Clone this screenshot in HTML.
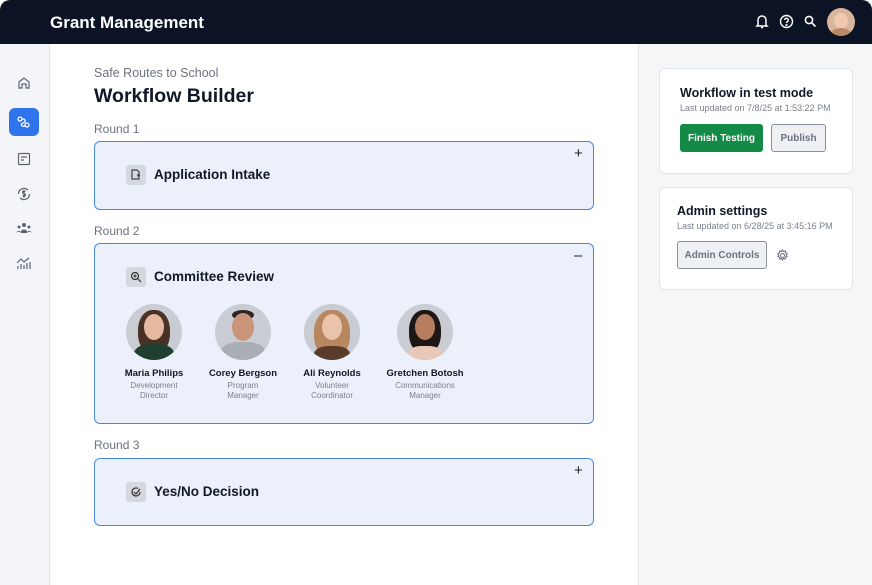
<!DOCTYPE html>
<html><head><style>
*{box-sizing:border-box;margin:0;padding:0}
body{width:872px;height:585px;overflow:hidden;font-family:"Liberation Sans",sans-serif;background:#fff;position:relative}
.hdr{position:absolute;left:0;top:0;width:872px;height:44px;background:#0b1324;border-radius:10px 10px 0 0}
.hdr .t{position:absolute;left:50px;top:13px;color:#fff;font-size:17px;font-weight:bold}
.side{position:absolute;left:0;top:44px;width:50px;height:541px;background:#f4f5f8;border-right:1px solid #e3e5ea}
.main{position:absolute;left:50px;top:44px;width:588px;height:541px;background:#fff}
.right{position:absolute;left:638px;top:44px;width:234px;height:541px;background:#f5f6f8;border-left:1px solid #e3e5ea}
.abs{position:absolute}
.card{position:absolute;left:94px;width:500px;background:#ebf0fb;border:1.5px solid #4a86e8;border-radius:6px}
.ic{position:absolute;width:20px;height:20px;background:#d5d8de;border-radius:3px}
.ct{position:absolute;font-size:13.5px;font-weight:bold;color:#111827}
.round{position:absolute;left:94px;font-size:12px;color:#6b7280}
.panel{position:absolute;left:659px;width:194px;background:#fff;border:1px solid #e2e5ea;border-radius:6px}
.btn{position:absolute;font-size:10px;font-weight:bold;border-radius:3px;display:flex;align-items:center;justify-content:center}
.p{position:absolute;text-align:center;width:100px}
.p .av{width:56px;height:56px;border-radius:50%;background:#c9ccd2;margin:0 auto;position:relative;overflow:hidden}
.p .n{font-size:9.5px;font-weight:bold;color:#111827;margin-top:8px}
.p .r{font-size:8px;color:#7b818c;line-height:10px;margin-top:2px}
</style></head><body>
<div class="hdr"><div class="t">Grant Management</div>
<svg class="abs" style="left:755px;top:14px" width="14" height="15" viewBox="0 0 14 15" fill="none" stroke="#fff" stroke-width="1.5"><path d="M3 11V6a4 4 0 018 0v5l1 1H2z"/><path d="M6 13.5h2"/></svg>
<svg class="abs" style="left:779px;top:14px" width="15" height="15" viewBox="0 0 15 15" fill="none" stroke="#fff" stroke-width="1.4"><circle cx="7.5" cy="7.5" r="6"/><path d="M5.7 6a1.8 1.8 0 113 1.4c-.8.5-1.2.8-1.2 1.6"/><circle cx="7.5" cy="11" r=".4"/></svg>
<svg class="abs" style="left:804px;top:15px" width="13" height="13" viewBox="0 0 13 13" fill="none" stroke="#fff" stroke-width="1.6"><circle cx="5" cy="5" r="3.6"/><path d="M7.8 7.8L11.5 11.5"/></svg>
<div class="abs" style="left:827px;top:8px;width:28px;height:28px;border-radius:50%;background:#d9b59c;overflow:hidden"><div style="position:absolute;left:7px;top:5px;width:14px;height:16px;border-radius:50%;background:#f0c9ae"></div><div style="position:absolute;left:4px;top:20px;width:20px;height:12px;border-radius:50%;background:#b88a6a"></div></div>
</div>
<div class="side">
<svg class="abs" style="left:17px;top:32px" width="14" height="14" viewBox="0 0 14 14" fill="none" stroke="#5b6270" stroke-width="1.2"><path d="M2 6l5-4 5 4v6H9V8H5v4H2z"/></svg>
<div class="abs" style="left:9px;top:64px;width:30px;height:28px;border-radius:6px;background:#2f74ec"></div>
<svg class="abs" style="left:16px;top:71px" width="16" height="14" viewBox="0 0 16 14" fill="none" stroke="#fff" stroke-width="1.3"><circle cx="4" cy="4" r="2"/><circle cx="11" cy="10" r="2"/><path d="M6 4c4 0 4 3 1 4s-2 4 2 3"/></svg>
<svg class="abs" style="left:17px;top:108px" width="14" height="14" viewBox="0 0 14 14" fill="none" stroke="#5b6270" stroke-width="1.2"><rect x="1.5" y="1.5" width="11" height="11" rx="1"/><path d="M4 5h6M4 8h3"/></svg>
<svg class="abs" style="left:16px;top:142px" width="16" height="16" viewBox="0 0 16 16" fill="none" stroke="#5b6270" stroke-width="1.2"><path d="M2.5 8a5.5 5.5 0 019.5-3.8M13.5 8A5.5 5.5 0 014 11.8"/><path d="M9.5 5.5c-.5-.7-3-.9-3 .7s3 .9 3 2.6-2.5 1.4-3 .7M8 4v8"/></svg>
<svg class="abs" style="left:15px;top:178px" width="18" height="12" viewBox="0 0 18 12" fill="#5b6270"><circle cx="9" cy="3" r="2"/><circle cx="4" cy="5" r="1.5"/><circle cx="14" cy="5" r="1.5"/><path d="M5.5 11a3.5 3.5 0 017 0zM1 11a3 3 0 015-1H1zM17 11a3 3 0 00-5-1h5z"/></svg>
<svg class="abs" style="left:16px;top:212px" width="15" height="14" viewBox="0 0 15 14" fill="none" stroke="#5b6270" stroke-width="1.2"><path d="M1 7l4-4 3 3 5-4M2 13v-3M5 13V8M8 13V9M11 13V7M14 13V6"/></svg>
</div>
<div class="main"></div>
<div class="right"></div>
<div class="abs" style="left:94px;top:66px;font-size:12.5px;color:#6b7280">Safe Routes to School</div>
<div class="abs" style="left:94px;top:85px;font-size:19.5px;font-weight:bold;color:#111827">Workflow Builder</div>
<div class="round" style="top:122px">Round 1</div>
<div class="card" style="top:141px;height:69px"></div>
<div class="abs" style="left:574px;top:145px;font-size:15px;color:#222">+</div>
<div class="ic" style="left:126px;top:165px"></div>
<svg class="abs" style="left:130px;top:169px" width="12" height="12" viewBox="0 0 12 12" fill="none" stroke="#444" stroke-width="1.2"><path d="M2 1h5l2 2v7H2zM7 7l3-1M8 5l1 3"/></svg>
<div class="ct" style="left:154px;top:167px">Application Intake</div>
<div class="round" style="top:224px">Round 2</div>
<div class="card" style="top:243px;height:181px"></div>
<div class="abs" style="left:574px;top:247px;font-size:15px;color:#222">–</div>
<div class="ic" style="left:126px;top:267px"></div>
<svg class="abs" style="left:130px;top:271px" width="12" height="12" viewBox="0 0 12 12" fill="none" stroke="#333" stroke-width="1.2"><circle cx="5" cy="5" r="3.5"/><path d="M7.5 7.5L11 11M5 3.5v3M3.5 5h3"/></svg>
<div class="ct" style="left:154px;top:269px">Committee Review</div>
<div class="p" style="left:104px;top:304px"><div class="av"><div style="position:absolute;left:12px;top:6px;width:32px;height:44px;border-radius:45%;background:#4a3126"></div><div style="position:absolute;left:18px;top:10px;width:20px;height:26px;border-radius:50%;background:#e5b9a0"></div><div style="position:absolute;left:8px;top:40px;width:40px;height:24px;border-radius:40%;background:#1f4030"></div></div><div class="n">Maria Philips</div><div class="r">Development<br>Director</div></div>
<div class="p" style="left:193px;top:304px"><div class="av"><div style="position:absolute;left:17px;top:6px;width:22px;height:10px;border-radius:50%;background:#2e2522"></div><div style="position:absolute;left:17px;top:9px;width:22px;height:28px;border-radius:50%;background:#c99479"></div><div style="position:absolute;left:6px;top:38px;width:44px;height:24px;border-radius:40%;background:#a9aeb5"></div></div><div class="n">Corey Bergson</div><div class="r">Program<br>Manager</div></div>
<div class="p" style="left:282px;top:304px"><div class="av"><div style="position:absolute;left:10px;top:6px;width:36px;height:48px;border-radius:45%;background:#b9875f"></div><div style="position:absolute;left:18px;top:10px;width:20px;height:26px;border-radius:50%;background:#eac3ab"></div><div style="position:absolute;left:10px;top:42px;width:36px;height:20px;border-radius:40%;background:#5a3a2a"></div></div><div class="n">Ali Reynolds</div><div class="r">Volunteer<br>Coordinator</div></div>
<div class="p" style="left:375px;top:304px"><div class="av"><div style="position:absolute;left:12px;top:6px;width:32px;height:44px;border-radius:45%;background:#1e1714"></div><div style="position:absolute;left:18px;top:10px;width:20px;height:26px;border-radius:50%;background:#b57e60"></div><div style="position:absolute;left:10px;top:42px;width:36px;height:20px;border-radius:40%;background:#e9c8b8"></div></div><div class="n">Gretchen Botosh</div><div class="r">Communications<br>Manager</div></div>
<div class="round" style="top:438px">Round 3</div>
<div class="card" style="top:458px;height:68px"></div>
<div class="abs" style="left:574px;top:462px;font-size:15px;color:#222">+</div>
<div class="ic" style="left:126px;top:482px"></div>
<svg class="abs" style="left:130px;top:486px" width="12" height="12" viewBox="0 0 12 12" fill="none" stroke="#333" stroke-width="1.2"><path d="M10 6a4 4 0 11-2-3.5"/><path d="M4 6l2 2 4-5"/></svg>
<div class="ct" style="left:154px;top:484px">Yes/No Decision</div>
<div class="panel" style="top:68px;height:106px"></div>
<div class="abs" style="left:680px;top:86px;font-size:12.5px;font-weight:bold;color:#111827">Workflow in test mode</div>
<div class="abs" style="left:680px;top:103px;font-size:9px;color:#7b818c">Last updated on 7/8/25 at 1:53:22 PM</div>
<div class="btn" style="left:680px;top:124px;width:83px;height:28px;background:#138a45;color:#fff">Finish Testing</div>
<div class="btn" style="left:771px;top:124px;width:55px;height:28px;background:#eef0f4;border:1px solid #8a909b;color:#6b7280">Publish</div>
<div class="panel" style="top:187px;height:103px"></div>
<div class="abs" style="left:677px;top:204px;font-size:12.5px;font-weight:bold;color:#111827">Admin settings</div>
<div class="abs" style="left:677px;top:221px;font-size:9px;color:#7b818c">Last updated on 6/28/25 at 3:45:16 PM</div>
<div class="btn" style="left:677px;top:241px;width:90px;height:28px;background:#eef0f4;border:1px solid #8a909b;color:#6b7280">Admin Controls</div>
<svg class="abs" style="left:776px;top:249px" width="13" height="13" viewBox="0 0 13 13" fill="none" stroke="#6b7280" stroke-width="1.1"><circle cx="6.5" cy="6.5" r="2"/><path d="M6.5 1l1 1.5 1.7-.5.3 1.7 1.6.7-.8 1.6.8 1.6-1.6.7-.3 1.7-1.7-.5-1 1.5-1-1.5-1.7.5-.3-1.7-1.6-.7.8-1.6-.8-1.6 1.6-.7.3-1.7 1.7.5z"/></svg>
</body></html>
